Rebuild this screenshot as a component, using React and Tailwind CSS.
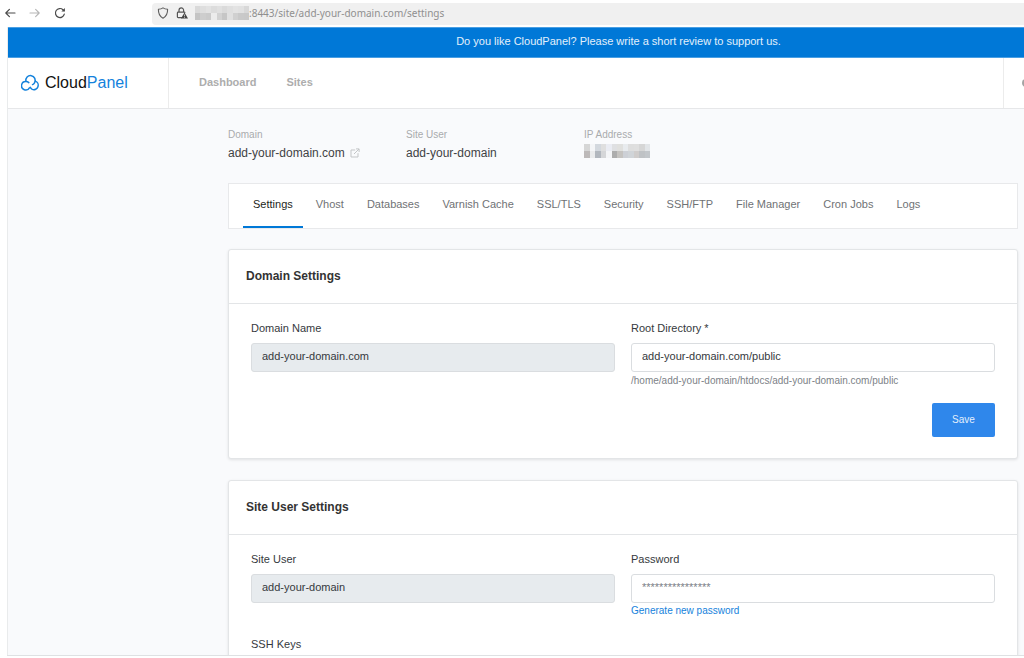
import React from 'react';

const TABS = ['Settings', 'Vhost', 'Databases', 'Varnish Cache', 'SSL/TLS', 'Security', 'SSH/FTP', 'File Manager', 'Cron Jobs', 'Logs'];

function Pixels({ cells, columns, label }) {
  return (
    <svg role="img" aria-label={label} viewBox={`0 0 ${columns} 2`} preserveAspectRatio="none" shapeRendering="crispEdges" className="block h-full w-full">
      {cells.map((c, i) => (
        <rect key={i} x={i % columns} y={Math.floor(i / columns)} width="1" height="1" fill={c} />
      ))}
    </svg>
  );
}

const HOST_CELLS = [
  '#d9d9d9', '#dedede', '#e2e2e2', '#dcdcdc', '#e0e0e0', '#dadada', '#dfdfdf', '#e3e3e3', '#e1e1e1', '#d8d8d8',
  '#c4c4c4', '#cdcdcd', '#cacaca', '#ececec', '#d2d2d2', '#c6c6c6', '#e0e0e0', '#d0d0d0', '#c9c9c9', '#c8c8c8',
];
const IP_CELLS = [
  '#d6d6d6', '#f4f5f7', '#d3d8de', '#dfdfdf', '#eaecf3', '#dfe0e2', '#e0e0de', '#e8ebee', '#dedede', '#dfdfdf', '#d6d6d6', '#e2e5e8',
  '#bdb9b9', '#eaebec', '#b2b7be', '#d5d6d8', '#f4f5f7', '#adadad', '#c5c3c0', '#cdd0d6', '#d0d4d8', '#cfcccb', '#bfc2c5', '#c2c6ca',
];

function BrowserBar() {
  return (
    <header className="flex h-[27px] shrink-0 items-center bg-white text-[#4a4a4a]">
      <div className="flex w-[152px] items-center gap-[13px] pb-px pl-1">
        <button aria-label="Back">
          <svg className="block size-3" viewBox="0 0 12 12" fill="none" stroke="currentColor" strokeWidth="1.2" strokeLinecap="round" strokeLinejoin="round">
            <path d="M11 6H1.8M5.4 2.4 1.8 6l3.6 3.6" />
          </svg>
        </button>
        <button aria-label="Forward" className="text-[#b5b5b5]">
          <svg className="block size-3" viewBox="0 0 12 12" fill="none" stroke="currentColor" strokeWidth="1.1" strokeLinecap="round" strokeLinejoin="round">
            <path d="M1 6h9.2M6.6 2.4 10.2 6 6.6 9.6" />
          </svg>
        </button>
        <button aria-label="Reload">
          <svg className="block size-3" viewBox="0 0 12 12" fill="none" stroke="currentColor" strokeWidth="1.2" strokeLinecap="round">
            <path d="M10.3 7.2A4.5 4.5 0 1 1 9 2.7l1 1" />
            <path d="M10.9 1v3.5H7.4z" fill="currentColor" stroke="none" />
          </svg>
        </button>
      </div>
      <div className="flex h-[22px] flex-1 items-center rounded-l bg-[#f0f0f0] pb-px pl-[5px]">
        <svg className="mr-[7px] size-3" viewBox="0 0 12 12" fill="none" stroke="#5f5f5f" strokeWidth="1.1" strokeLinejoin="round">
          <path d="M6 .9c1.3.9 2.8 1.3 4.6 1.4.1 4.3-1.3 7.3-4.6 8.9C2.7 9.6 1.3 6.6 1.4 2.3 3.2 2.2 4.7 1.8 6 .9z" />
        </svg>
        <svg className="mr-[7px] size-3" viewBox="0 0 12 12" fill="none" stroke="#555" strokeWidth="1.2">
          <path d="M3 5.2V3.2a2.3 2.3 0 0 1 4.6 0v2M6 10.6H2.2a.8.8 0 0 1-.8-.8V6a.8.8 0 0 1 .8-.8h6a.8.8 0 0 1 .8.6" />
          <path d="M8.5 5.6 12 11.5H5z" fill="#444" stroke="none" />
          <path d="M8.5 7.6v1.8M8.5 10v.8" stroke="#f0f0f0" strokeWidth=".7" />
        </svg>
        <div className="h-[14px] w-[54px]">
          <Pixels cells={HOST_CELLS} columns={10} label="Server address" />
        </div>
        <span className="font-['Noto_Sans','Open_Sans',sans-serif] text-[10px] leading-4 text-[#8f8f8f]">:8443/site/add-your-domain.com/settings</span>
      </div>
    </header>
  );
}

function Logo() {
  return (
    <a href="#home" className="flex w-[161px] items-center gap-[5px] border-r border-[#ececec] pl-[13px]">
      <svg className="h-[18px] w-[19px]" viewBox="0 0 19 18" fill="none" stroke="#1482dc" strokeWidth="1.5" strokeLinecap="round">
        <path d="M8.4 13.8A4.2 4.2 0 1 1 5 7.6a4.2 4.2 0 0 1 2.8 1" />
        <path d="M4.9 7.3a4.7 4.7 0 1 1 8.6 1.500c-.5.9-1.200 1.500-2 1.800" />
        <path d="M14.3 7.1a4.4 4.4 0 1 1-3 8.3c-1-.5-1.6-1.200-2-2.200" />
      </svg>
      <span className="text-base leading-5 text-[#111]">Cloud<span className="text-[#1482dc]">Panel</span></span>
    </a>
  );
}

function Info({ label, children }) {
  return (
    <div className="w-[178px]">
      <dt className="text-[10px] leading-4 text-[#a9abad]">{label}</dt>
      <dd className="mt-[2px] flex h-4 items-center gap-[5px] text-xs leading-4 text-[#3f4245]">{children}</dd>
    </div>
  );
}

function Card({ title, children }) {
  return (
    <section className="mb-[21px] rounded-[3px] border border-[#e3e5e7] bg-white shadow-[0_1px_3px_rgba(0,0,0,0.10)]">
      <h2 className="flex h-[54px] items-center border-b border-[#e3e5e7] px-[17px] pb-[2px] text-xs font-bold leading-5 text-[#333]">{title}</h2>
      <form className="px-[22px] pb-[21px] pt-4" onSubmit={(e) => e.preventDefault()}>{children}</form>
    </section>
  );
}

function Field({ id, label, note, ...input }) {
  return (
    <div>
      <label htmlFor={id} className="block text-[11px] leading-4 text-[#35393d]">{label}</label>
      <input
        id={id}
        {...input}
        className="mt-[7px] block h-[29px] w-full rounded-[3px] border border-[#dadde0] bg-white px-[10px] pb-[3px] text-[11px] text-[#35393d] placeholder:text-[#7b8086] read-only:bg-[#e7ebee]"
      />
      {note}
    </div>
  );
}

export default function App() {
  return (
    <div className="flex h-screen flex-col overflow-hidden bg-white font-['Liberation_Sans',Arial,sans-serif]">
      <BrowserBar />
      <div className="ml-[7px] flex min-h-0 flex-1 flex-col overflow-hidden border-l border-[#e9ebec] bg-[#f9fafc]">
        <a href="#review" className="flex h-[31px] shrink-0 items-center justify-center border-y border-[#4a9fe3] bg-[#0078d7] pl-[205px] pb-[2px] text-[11px] text-[#e3f0fb]">
          Do you like CloudPanel? Please write a short review to support us.
        </a>
        <div className="flex h-[51px] shrink-0 border-b border-[#e6e7e9] bg-white">
          <Logo />
          <nav className="flex flex-1 items-center gap-[30px] pb-[2px] pl-[30px] text-[11px] font-bold text-[#adadad]">
            <a href="#dashboard">Dashboard</a>
            <a href="#sites">Sites</a>
          </nav>
          <div className="flex w-[21px] items-center overflow-hidden border-l border-[#ececec] pl-[18px]">
            <button aria-label="Account" className="size-2 shrink-0 rounded-full bg-[#a3a3a3]" />
          </div>
        </div>
        <main className="pl-[220px] pr-[6px] pt-[18px]">
          <dl className="flex">
            <Info label="Domain">
              add-your-domain.com
              <a href="#visit" aria-label="Open site">
                <svg className="block size-[10px]" viewBox="0 0 10 10" fill="none" stroke="#c3c5c7" strokeWidth="1">
                  <path d="M5.2 2H1v7h7V5.2M6 .9h3.1V4M9 1 4 6" />
                </svg>
              </a>
            </Info>
            <Info label="Site User">add-your-domain</Info>
            <Info label="IP Address">
              <div className="mb-1 h-[14px] w-[66px]">
                <Pixels cells={IP_CELLS} columns={12} label="Hidden address" />
              </div>
            </Info>
          </dl>
          <nav className="mb-5 mt-[22px] flex h-[46px] gap-[3px] border border-[#e8e9eb] bg-white pl-[14px]">
            {TABS.map((tab, i) => (
              <a
                key={tab}
                href={'#' + tab}
                aria-current={i === 0 ? 'page' : undefined}
                className={i === 0
                  ? 'flex items-center border-b-2 border-[#0078d7] px-[10px] pb-px text-[11px] text-[#1d1f21]'
                  : 'flex items-center border-b-2 border-transparent px-[10px] pb-px text-[11px] text-[#6f7275]'}
              >
                {tab}
              </a>
            ))}
          </nav>
          <Card title="Domain Settings">
            <div className="grid grid-cols-2 gap-4">
              <Field id="domain" label="Domain Name" defaultValue="add-your-domain.com" readOnly />
              <Field
                id="root"
                label="Root Directory *"
                defaultValue="add-your-domain.com/public"
                note={<p className="mt-px text-[10px] leading-4 text-[#7d8287]">/home/add-your-domain/htdocs/add-your-domain.com/public</p>}
              />
            </div>
            <div className="mt-[14px] flex justify-end">
              <button className="h-[34px] w-[63px] rounded-[2px] bg-[#2f87eb] pb-[2px] text-[10px] text-[#e3effc]">Save</button>
            </div>
          </Card>
          <Card title="Site User Settings">
            <div className="grid grid-cols-2 gap-4">
              <Field id="user" label="Site User" defaultValue="add-your-domain" readOnly />
              <Field
                id="password"
                label="Password"
                placeholder="****************"
                note={<a href="#generate" className="block text-[10px] leading-4 text-[#1482dc]">Generate new password</a>}
              />
            </div>
            <label htmlFor="keys" className="mt-[17px] block text-[11px] leading-4 text-[#35393d]">SSH Keys</label>
            <textarea id="keys" rows={4} className="mt-[7px] block w-full rounded-[3px] border border-[#dadde0]" />
          </Card>
        </main>
      </div>
      <footer className="ml-[7px] h-[3px] shrink-0 border-t border-[#dfe1e3] bg-white" />
    </div>
  );
}
